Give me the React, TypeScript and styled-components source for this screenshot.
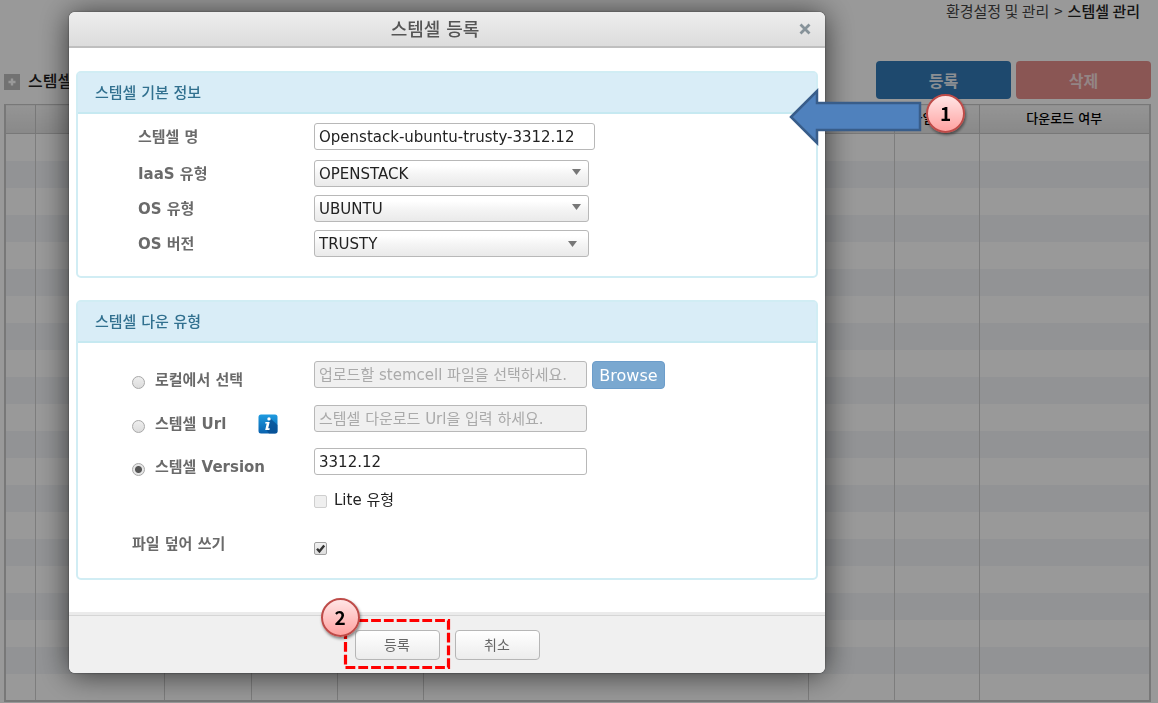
import React from "react";
import styled, { createGlobalStyle, css } from "styled-components";

const GlobalStyle = createGlobalStyle`
  * { box-sizing: border-box; }
  body {
    margin: 0;
    background: #fff;
    font-family: "DejaVu Sans", "Noto Sans CJK KR", sans-serif;
    font-size: 15px;
    color: #222;
  }
  button, input, select { font-family: inherit; margin: 0; }
`;

/* ---------- page behind the dialog ---------- */

const Page = styled.main`
  padding: 0 7px 0 4px;
`;

const Breadcrumb = styled.nav`
  display: flex;
  justify-content: flex-end;
  gap: 5px;
  height: 61px;
  padding: 1px 11px 0 0;
  font-family: "Noto Sans CJK KR", sans-serif;
  font-size: 15px;
  line-height: 20px;
  color: #444;
`;

const Current = styled.span`
  font-weight: 500;
  color: #222;
`;

const Toolbar = styled.div`
  display: flex;
  align-items: center;
  gap: 5px;
  height: 38px;
  margin-bottom: 5px;
`;

const PageTitle = styled.h1`
  display: flex;
  align-items: center;
  gap: 8px;
  flex: 1;
  margin: 0;
  padding-top: 4px;
  font-size: 16px;
  line-height: 24px;
  font-weight: 500;
  color: #222;
`;

const ActionButton = styled.button<{ $danger?: boolean }>`
  width: 135px;
  height: 38px;
  border: 0;
  border-radius: 4px;
  background: ${(p) => (p.$danger ? "#e68f8d" : "#337ab7")};
  color: ${(p) => (p.$danger ? "#f6dede" : "#e8eef5")};
  font-size: 16px;
  font-weight: bold;
`;

const Grid = styled.table`
  width: 100%;
  table-layout: fixed;
  border-collapse: collapse;
  border: 2px solid #c8c8c8;
  border-top: 1px solid #c0c0c0;
`;

const Col = styled.col<{ $w?: number }>`
  width: ${(p) => (p.$w ? `${p.$w}px` : "auto")};
`;

const HeadCell = styled.th`
  height: 29px;
  padding: 0;
  border: 1px solid #c8c8c8;
  background: linear-gradient(#f8f8f8, #e4e4e4);
  font-size: 13px;
  line-height: 20px;
  font-weight: 500;
  color: #000;
  white-space: nowrap;
`;

const BodyRow = styled.tr`
  height: 27px;
  &:nth-child(even) { background: #f3f5f8; }
`;

const Cell = styled.td`
  padding: 0;
  border-right: 1px solid #d0d0d0;
`;

/* ---------- dialog ---------- */

const Overlay = styled.div`
  position: fixed;
  inset: 0;
  padding: 12px 333px 29px 69px;
  background: rgba(0, 0, 0, 0.4);
`;

const Dialog = styled.section`
  position: relative;
  min-width: 620px;
  border-radius: 6px;
  background: #fff;
  box-shadow: 0 2px 30px rgba(0, 0, 0, 0.65), 0 0 2px rgba(0, 0, 0, 0.5);
`;

const DialogHeader = styled.header`
  position: relative;
  height: 36px;
  border-bottom: 2px solid #bfbfbf;
  border-radius: 6px 6px 0 0;
  background: linear-gradient(#ededed, #dcdcdc);
`;

const DialogTitle = styled.h2`
  margin: 0;
  padding-right: 24px;
  font-size: 18px;
  line-height: 36px;
  font-weight: 500;
  text-align: center;
  color: #555;
`;

const CloseButton = styled.button`
  position: absolute;
  top: 10px;
  right: 13px;
  width: 14px;
  height: 14px;
  padding: 0;
  border: 0;
  background: none;
  svg { display: block; }
`;

const DialogBody = styled.div`
  display: flex;
  flex-direction: column;
  gap: 22px;
  padding: 23px 7px 32px;
`;

const Panel = styled.fieldset`
  min-width: 0;
  margin: 0;
  padding: 0;
  border: 2px solid #d1edf4;
  border-radius: 5px;
`;

const PanelTitle = styled.h3`
  margin: 0;
  padding: 0 17px;
  height: 41px;
  border-bottom: 2px solid #c6e9f1;
  background: #d9edf7;
  font-size: 15px;
  line-height: 40px;
  font-weight: 500;
  color: #31708f;
`;

const BasicRows = styled.div`
  display: flex;
  flex-direction: column;
  gap: 8px;
  padding: 9px 0 19px 60px;
`;

const Row = styled.div<{ $spaced?: boolean }>`
  display: flex;
  align-items: center;
  padding-bottom: ${(p) => (p.$spaced ? "2px" : "0")};
`;

const Label = styled.label`
  width: 176px;
  font-size: 15px;
  line-height: 24px;
  font-weight: bold;
  color: #6a6a6a;
`;

const fieldBox = css`
  height: 27px;
  padding: 0 4px;
  border: 1px solid #b8b8b8;
  border-radius: 3px;
  font-size: 15px;
  color: #222;
`;

const TextInput = styled.input<{ $w: number }>`
  ${fieldBox}
  width: ${(p) => p.$w}px;
  background: #fff;
  &:disabled { background: #f0f0f0; }
  &::placeholder { color: #aaa; opacity: 1; }
`;

const SelectWrap = styled.div`
  position: relative;
  width: 275px;
`;

const SelectBox = styled.select`
  ${fieldBox}
  display: block;
  width: 100%;
  appearance: none;
  background: linear-gradient(#fff 20%, #f4f4f4 55%, #eaeaea);
`;

const Caret = styled.svg<{ $inset?: boolean }>`
  position: absolute;
  top: ${(p) => (p.$inset ? "11px" : "9px")};
  right: ${(p) => (p.$inset ? "12px" : "8px")};
  width: 9px;
  height: 6px;
  fill: #777;
  pointer-events: none;
`;

const DownRows = styled.div`
  padding: 18px 0 18px 54px;
`;

const DownRow = styled.div<{ $h: number }>`
  display: flex;
  align-items: flex-start;
  height: ${(p) => p.$h}px;
`;

const Choice = styled.div`
  display: flex;
  align-items: center;
  width: 182px;
  padding-top: 6px;
`;

const ChoiceLabel = styled.label`
  font-size: 15px;
  line-height: 26px;
  font-weight: bold;
  color: #6a6a6a;
`;

const Radio = styled.input.attrs({ type: "radio" })`
  appearance: none;
  flex: none;
  width: 13px;
  height: 13px;
  margin: 4px 10px 0 0;
  border: 1px solid #a8a8a8;
  border-radius: 50%;
  background: linear-gradient(#eee, #dcdcdc);
  &:checked {
    background: radial-gradient(circle, #555 0 3px, #e6e6e6 4px);
  }
`;

const Info = styled.svg`
  display: block;
  width: 20px;
  height: 20px;
  margin-left: 32px;
`;

const BrowseButton = styled.button`
  height: 28px;
  width: 73px;
  margin-left: 5px;
  padding: 0;
  border: 1px solid #6c9dca;
  border-radius: 4px;
  background: #7aa8d0;
  font-size: 16px;
  color: #fff;
`;

const OverwriteRow = styled.div`
  display: flex;
  align-items: flex-start;
  height: 28px;
`;

const OverwriteLabel = styled.label`
  width: 182px;
  font-size: 15px;
  line-height: 24px;
  font-weight: bold;
  color: #6a6a6a;
`;

const TickHolder = styled.span<{ $low?: boolean }>`
  position: relative;
  display: block;
  width: 13px;
  height: 13px;
  margin-top: ${(p) => (p.$low ? "10px" : "5px")};
  svg { position: absolute; inset: 0; pointer-events: none; }
`;

const Tick = styled.input.attrs({ type: "checkbox" })`
  appearance: none;
  display: block;
  width: 13px;
  height: 13px;
  border: 1px solid #a0a0a0;
  border-radius: 2px;
  background: linear-gradient(#f0f0f0, #dedede);
  &:disabled { border-color: #cfcfcf; background: #efefef; }
`;

const TickLabel = styled.label`
  margin-left: 7px;
  font-size: 15px;
  line-height: 20px;
  color: #222;
`;

const DialogFooter = styled.footer`
  display: flex;
  justify-content: center;
  gap: 15px;
  height: 61px;
  padding-top: 15px;
  border-top: 3px solid #ebebeb;
  border-radius: 0 0 6px 6px;
  background: #f0f0f0;
  box-shadow: inset 0 1px 0 #d6d6d6;
`;

const FooterItem = styled.div`
  position: relative;
`;

const FooterButton = styled.button`
  display: block;
  width: 85px;
  height: 30px;
  padding: 0 0 2px;
  border: 1px solid #b6b6b6;
  border-radius: 4px;
  background: linear-gradient(#fff, #ececec);
  font-size: 14px;
  color: #666;
`;

/* ---------- guide marks laid over the screen ---------- */

const ArrowMark = styled.svg`
  position: absolute;
  top: 76px;
  left: calc(100% - 36px);
  width: 134px;
  height: 58px;
`;

const DashedMark = styled.svg`
  position: absolute;
  top: -12px;
  left: -12px;
  width: 108px;
  height: 52px;
`;

const Badge = styled.span<{ $at: "arrow" | "button" }>`
  position: absolute;
  ${(p) =>
    p.$at === "arrow"
      ? "top: 82px; left: calc(100% + 101px);"
      : "top: -32px; left: -34px;"}
  width: 39px;
  height: 39px;
  border: 2px solid #be4b48;
  border-radius: 50%;
  background: linear-gradient(#ffe5e5, #ffa2a1);
  box-shadow: 1px 2px 3px rgba(0, 0, 0, 0.45);
  font-family: "Noto Sans CJK KR", sans-serif;
  font-size: 19px;
  line-height: 34px;
  font-weight: bold;
  text-align: center;
  color: #000;
`;

const COLUMNS: { width?: number; title?: string }[] = [
  { width: 30 },
  { width: 129 },
  { width: 87 },
  { width: 86 },
  { width: 86 },
  {},
  { width: 86 },
  { width: 85, title: "파일 크기" },
  { width: 171, title: "다운로드 여부" },
];

const ROWS = Array.from({ length: 21 }, (_, i) => i);

const SELECTS = [
  { id: "iaas", label: "IaaS 유형", value: "OPENSTACK" },
  { id: "os", label: "OS 유형", value: "UBUNTU" },
  { id: "osver", label: "OS 버전", value: "TRUSTY", inset: true },
];

function StemcellPage() {
  return (
    <Page>
      <Breadcrumb>
        <span>환경설정 및 관리</span>
        <span>&gt;</span>
        <Current>스템셀 관리</Current>
      </Breadcrumb>
      <Toolbar>
        <PageTitle>
          <svg width="16" height="16" viewBox="0 0 16 16" aria-hidden="true">
            <rect width="16" height="16" fill="#bebebe" />
            <path d="M8 4.5v7M4.5 8h7" stroke="#fff" strokeWidth="2.4" />
          </svg>
          스템셀
        </PageTitle>
        <ActionButton type="button">등록</ActionButton>
        <ActionButton type="button" $danger>삭제</ActionButton>
      </Toolbar>
      <Grid>
        <colgroup>
          {COLUMNS.map((c, i) => <Col key={i} $w={c.width} />)}
        </colgroup>
        <thead>
          <tr>
            {COLUMNS.map((c, i) => <HeadCell key={i}>{c.title}</HeadCell>)}
          </tr>
        </thead>
        <tbody>
          {ROWS.map((r) => (
            <BodyRow key={r}>
              {COLUMNS.map((_, i) => <Cell key={i} />)}
            </BodyRow>
          ))}
        </tbody>
      </Grid>
    </Page>
  );
}

function InfoIcon() {
  return (
    <Info viewBox="0 0 20 20" aria-hidden="true">
      <defs>
        <linearGradient id="info" x1="0" y1="0" x2="0" y2="1">
          <stop offset="0" stopColor="#1e9be0" />
          <stop offset="1" stopColor="#0a62ae" />
        </linearGradient>
      </defs>
      <rect x="0.5" y="0.5" width="19" height="19" rx="2.5" fill="url(#info)" />
      <path d="M12 4l7.500 7v6a2.500 2.500 0 0 1-2.500 2.500H11l-2.500-3.500z" fill="#06498c" opacity="0.7" />
      <circle cx="11" cy="4.900" r="1.700" fill="#fff" />
      <path d="M7.500 8h4.200l-1.500 6.300h1.600l-.4 1.600H7.200l1.500-6.300H7.100z" fill="#fff" />
    </Info>
  );
}

export default function App() {
  return (
    <>
      <GlobalStyle />
      <StemcellPage />
      <Overlay>
        <Dialog role="dialog" aria-labelledby="dialog-title">
          <DialogHeader>
            <DialogTitle id="dialog-title">스템셀 등록</DialogTitle>
            <CloseButton type="button" aria-label="닫기">
              <svg width="14" height="14" viewBox="0 0 14 14">
                <path d="M2.500 2.500l9 9M11.500 2.500l-9 9" stroke="#869299" strokeWidth="2.800" />
              </svg>
            </CloseButton>
          </DialogHeader>

          <DialogBody>
            <Panel>
              <PanelTitle>스템셀 기본 정보</PanelTitle>
              <BasicRows>
                <Row $spaced>
                  <Label htmlFor="name">스템셀 명</Label>
                  <TextInput id="name" $w={281} defaultValue="Openstack-ubuntu-trusty-3312.12" />
                </Row>
                {SELECTS.map((s) => (
                  <Row key={s.id}>
                    <Label htmlFor={s.id}>{s.label}</Label>
                    <SelectWrap>
                      <SelectBox id={s.id} defaultValue={s.value}>
                        <option>{s.value}</option>
                      </SelectBox>
                      <Caret $inset={s.inset} viewBox="0 0 9 6" aria-hidden="true">
                        <path d="M0 0h9L4.500 6z" />
                      </Caret>
                    </SelectWrap>
                  </Row>
                ))}
              </BasicRows>
            </Panel>

            <Panel>
              <PanelTitle>스템셀 다운 유형</PanelTitle>
              <DownRows>
                <DownRow $h={44}>
                  <Choice>
                    <Radio id="local" name="source" />
                    <ChoiceLabel htmlFor="local">로컬에서 선택</ChoiceLabel>
                  </Choice>
                  <TextInput $w={273} disabled aria-label="로컬에서 선택" placeholder="업로드할 stemcell 파일을 선택하세요." />
                  <BrowseButton type="button">Browse</BrowseButton>
                </DownRow>
                <DownRow $h={43}>
                  <Choice>
                    <Radio id="url" name="source" />
                    <ChoiceLabel htmlFor="url">스템셀 Url</ChoiceLabel>
                    <InfoIcon />
                  </Choice>
                  <TextInput $w={273} disabled aria-label="스템셀 Url" placeholder="스템셀 다운로드 Url을 입력 하세요." />
                </DownRow>
                <DownRow $h={42}>
                  <Choice>
                    <Radio id="version" name="source" defaultChecked />
                    <ChoiceLabel htmlFor="version">스템셀 Version</ChoiceLabel>
                  </Choice>
                  <TextInput $w={273} aria-label="스템셀 Version" defaultValue="3312.12" />
                </DownRow>
                <DownRow $h={42}>
                  <Choice />
                  <TickHolder>
                    <Tick id="lite" disabled />
                  </TickHolder>
                  <TickLabel htmlFor="lite">Lite 유형</TickLabel>
                </DownRow>
                <OverwriteRow>
                  <OverwriteLabel htmlFor="overwrite">파일 덮어 쓰기</OverwriteLabel>
                  <TickHolder $low>
                    <Tick id="overwrite" defaultChecked />
                    <svg width="13" height="13" viewBox="0 0 13 13" aria-hidden="true">
                      <path d="M3 6.800l2.400 2.600L10.200 3.400" fill="none" stroke="#333" strokeWidth="2.400" />
                    </svg>
                  </TickHolder>
                </OverwriteRow>
              </DownRows>
            </Panel>
          </DialogBody>

          <DialogFooter>
            <FooterItem>
              <FooterButton type="button">등록</FooterButton>
              <DashedMark viewBox="0 0 108 52" aria-hidden="true">
                <rect x="2.500" y="2.500" width="103" height="47" fill="none" stroke="#f00" strokeWidth="3.200" strokeDasharray="9.800 3" />
              </DashedMark>
              <Badge $at="button">2</Badge>
            </FooterItem>
            <FooterItem>
              <FooterButton type="button">취소</FooterButton>
            </FooterItem>
          </DialogFooter>

          <ArrowMark viewBox="0 0 134 58" aria-hidden="true">
            <path d="M2 29L28 3v12h103v27H28v13z" fill="#4f81bd" stroke="#385d8a" strokeWidth="2.500" />
          </ArrowMark>
          <Badge $at="arrow">1</Badge>
        </Dialog>
      </Overlay>
    </>
  );
}
